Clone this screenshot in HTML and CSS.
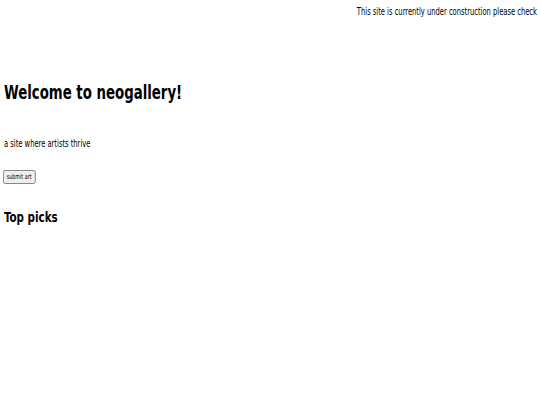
FILE: index.html
```html
<!DOCTYPE html>
<html>
<head>
<meta charset="utf-8">
<link rel="stylesheet" href="styles.css">
</head>
<body>
<div class="notice"><p class="notice-text">This site is currently under construction please check</p></div>
<h1 class="title">Welcome to neogallery!</h1>
<p class="tagline">a site where artists thrive</p>
<button class="submit">submit art</button>
<h2 class="picks">Top picks</h2>
</body>
</html>
```
FILE: styles.css
```css
body {
  margin: 0;
  padding: 0 4px;
  font-family: "DejaVu Sans", sans-serif;
  font-stretch: condensed;
  font-size: 10px;
  line-height: 12px;
  color: #000;
  background: #fff;
}
.notice {
  margin: 6px -1px 0 0;
  white-space: nowrap;
  text-align: right;
}
.notice-text {
  margin: 0;
  transform: scaleX(0.75);
  transform-origin: right center;
}
.title {
  margin: 62px 0 0;
  font-size: 20px;
  line-height: 24px;
  font-weight: bold;
  transform: scaleX(0.74);
  transform-origin: left center;
}
.tagline {
  margin: 34px 0 0;
  transform: scaleX(0.75);
  transform-origin: left center;
}
.submit {
  display: block;
  margin: 20px 0 0 -1px;
  padding: 1px 3px;
  font-family: inherit;
  font-stretch: condensed;
  font-size: 7px;
  line-height: 8px;
  transform: scaleX(0.76);
  transform-origin: left center;
}
.picks {
  margin: 25px 0 0;
  font-size: 14px;
  line-height: 16px;
  font-weight: bold;
  transform: scaleX(0.82);
  transform-origin: left center;
}
```
